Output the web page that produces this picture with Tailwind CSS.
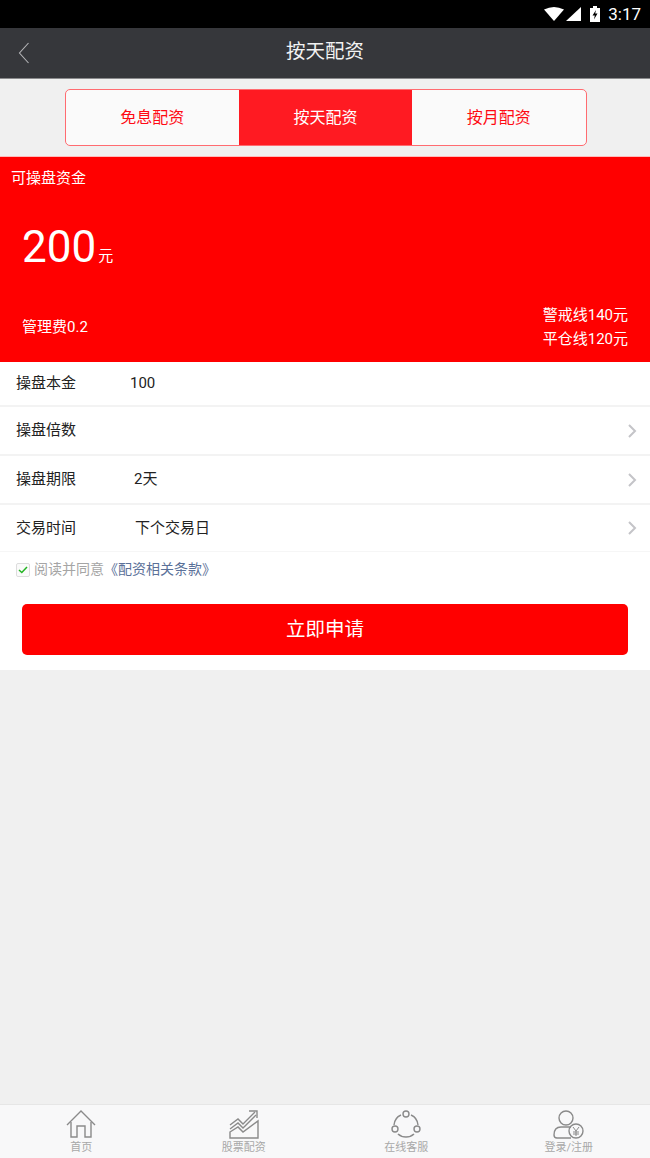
<!DOCTYPE html>
<html lang="zh">
<head>
    <meta charset="UTF-8">
    <meta name="viewport" content="width=device-width, initial-scale=1.0">
    <title>按天配资</title>
    <script src="https://cdn.jsdelivr.net/npm/@tailwindcss/browser@4"></script>
</head>
<body class="bg-[#f0f0f0] font-['Roboto','Noto_Sans_CJK_SC',sans-serif]">
    <div class="w-[650px] h-[1158px] flex flex-col overflow-hidden">
        <!-- status bar -->
        <div class="h-[28px] bg-black flex items-center justify-end text-white pr-[9px]">
            <svg width="20" height="14" viewBox="0 0 20 14" class="mr-[2px]"><path d="M0 2.5 Q10 -2.5 20 2.5 L10 14Z" fill="#fff"/></svg>
            <svg width="15" height="14" viewBox="0 0 15 14" class="mr-[9px]"><path d="M15 0V14H0Z" fill="#fff"/></svg>
            <svg width="10" height="16" viewBox="0 0 10 16" class="mr-[8px]"><path d="M3 0H7V2H10V16H0V2H3Z" fill="#fff"/><path d="M6 4 L2.5 9.5H4.8L4 13.5 7.5 7.5H5.2Z" fill="#000"/></svg>
            <span class="text-[17px] leading-none">3:17</span>
        </div>

        <!-- title bar -->
        <header class="relative h-[51px] bg-[#36373b] border-b border-[#8a8a8c] flex items-center justify-center">
            <svg width="12" height="22" viewBox="0 0 12 22" class="absolute left-[18px] top-[14px]" fill="none" stroke="#b5b5b7" stroke-width="1.1"><path d="M10.5 1 L1.5 11 L10.5 21"/></svg>
            <h1 class="text-[19.5px] leading-[24px] -mt-[2px] text-[#f2f2f2] font-normal">按天配资</h1>
        </header>

        <!-- tabs -->
        <div class="h-[78px] pl-[1px] flex items-center justify-center border-b border-[#fbb]">
            <div class="w-[522px] h-[57px] flex rounded-[5px] border border-[#ff6b70] bg-[#fafafa] overflow-hidden text-[16px] text-[#ff0a14]">
                <div class="flex-1 flex items-center justify-center">免息配资</div>
                <div class="flex-1 flex items-center justify-center bg-[#ff1a22] text-white">按天配资</div>
                <div class="flex-1 flex items-center justify-center">按月配资</div>
            </div>
        </div>

        <!-- amount card -->
        <section class="h-[205px] bg-[#ff0000] text-white flex flex-col text-[15px]">
            <p class="leading-[20px] pl-[11px] pt-[11px]">可操盘资金</p>
            <div class="flex items-end pl-[22px] pt-[34px]">
                <span class="text-[44px] leading-[50px]">200</span>
                <span class="leading-[20px] ml-[2px] mb-[6px]">元</span>
            </div>
            <div class="flex justify-between items-center px-[22px] pt-[31px]">
                <span>管理费0.2</span>
                <div class="leading-[24px] text-right">
                    <p>警戒线140元</p>
                    <p>平仓线120元</p>
                </div>
            </div>
        </section>

        <!-- form -->
        <div class="bg-white h-[308px] text-[15px] text-[#222]">
            <div class="h-[45px] flex items-center border-b-2 border-[#f3f3f3] pl-[16px]">
                <span class="w-[114px]">操盘本金</span><span>100</span>
            </div>
            <div class="h-[49px] flex items-center justify-between border-b-2 border-[#f3f3f3] pl-[16px] pr-[13px]">
                <span>操盘倍数</span>
                <svg width="10" height="16" viewBox="0 0 10 16" fill="none" stroke="#c4c4c8" stroke-width="2"><path d="M2 2 L8 8 L2 14"/></svg>
            </div>
            <div class="h-[49px] flex items-center border-b-2 border-[#f3f3f3] pl-[16px] pr-[13px]">
                <span class="w-[118px]">操盘期限</span><span class="flex-1">2天</span>
                <svg width="10" height="16" viewBox="0 0 10 16" fill="none" stroke="#c4c4c8" stroke-width="2"><path d="M2 2 L8 8 L2 14"/></svg>
            </div>
            <div class="h-[47px] flex items-center border-b border-[#f6f6f6] pl-[16px] pr-[13px]">
                <span class="w-[119px]">交易时间</span><span class="flex-1">下个交易日</span>
                <svg width="10" height="16" viewBox="0 0 10 16" fill="none" stroke="#c4c4c8" stroke-width="2"><path d="M2 2 L8 8 L2 14"/></svg>
            </div>
            <div class="h-[35px] flex items-center pl-[16px] text-[14px]">
                <span class="w-[14px] h-[14px] rounded-[2px] border border-[#ddd] bg-[#fafafa] flex items-center justify-center mr-[4px]">
                    <svg width="10" height="8" viewBox="0 0 10 8" fill="none" stroke="#22b422" stroke-width="1.5"><path d="M1 4 L3.8 6.5 L9 1"/></svg>
                </span>
                <span class="text-[#a5a5a5]">阅读并同意</span><span class="text-[#5b7199]">《配资相关条款》</span>
            </div>
            <div class="px-[22px] pt-[17px]">
                <button class="w-full h-[51px] rounded-[5px] bg-[#ff0000] text-white text-[19.5px]">立即申请</button>
            </div>
        </div>

        <div class="flex-1"></div>

        <!-- bottom nav -->
        <nav class="h-[54px] bg-[#f8f8f9] border-t border-[#e6e6e6] grid grid-cols-4 text-[11px] leading-[12px] text-[#a8a8a8] text-center">
            <div class="flex flex-col items-center pt-[5px]">
                <svg width="30" height="29" viewBox="0 0 30 29" fill="none" stroke="#8a8a8a" stroke-width="1.4"><path d="M1 15 L15 1 L29 15"/><path d="M5 12 V27 H11 V16 H19 V27 H25 V12"/></svg>
                <span class="mt-[3px]">首页</span>
            </div>
            <div class="flex flex-col items-center pt-[5px]">
                <svg width="30" height="29" viewBox="0 0 30 29" fill="none" stroke="#8a8a8a" stroke-width="1.4"><path d="M1 15 L9 9 L14 14 L26 2"/><path d="M1 19 L9 13 L14 18 L27 5"/><path d="M20 1 H28 V8"/><path d="M1 22 L9 17 L14 22 L29 11 V28 H1Z"/></svg>
                <span class="mt-[3px]">股票配资</span>
            </div>
            <div class="flex flex-col items-center pt-[5px]">
                <svg width="30" height="29" viewBox="0 0 30 29" fill="none" stroke="#8a8a8a" stroke-width="1.4"><circle cx="15" cy="4" r="3"/><circle cx="4" cy="19" r="3"/><circle cx="26" cy="19" r="3"/><path d="M10 5 A12 12 0 0 0 3 15"/><path d="M20 5 A12 12 0 0 1 27 15"/><path d="M7 24 A12 12 0 0 0 23 24" stroke-width="1.6"/></svg>
                <span class="mt-[3px]">在线客服</span>
            </div>
            <div class="flex flex-col items-center pt-[5px]">
                <svg width="32" height="29" viewBox="0 0 32 29" fill="none" stroke="#8a8a8a" stroke-width="1.4"><circle cx="13" cy="8" r="7"/><path d="M18 17 H8 Q1 17 1 25 Q1 28 4 28 H18"/><circle cx="23" cy="21" r="7"/><path d="M20 17 L23 21 L26 17 M23 21 V26 M20 22 H26 M20 24 H26" stroke-width="1"/></svg>
                <span class="mt-[3px]">登录/注册</span>
            </div>
        </nav>
    </div>
</body>
</html>
